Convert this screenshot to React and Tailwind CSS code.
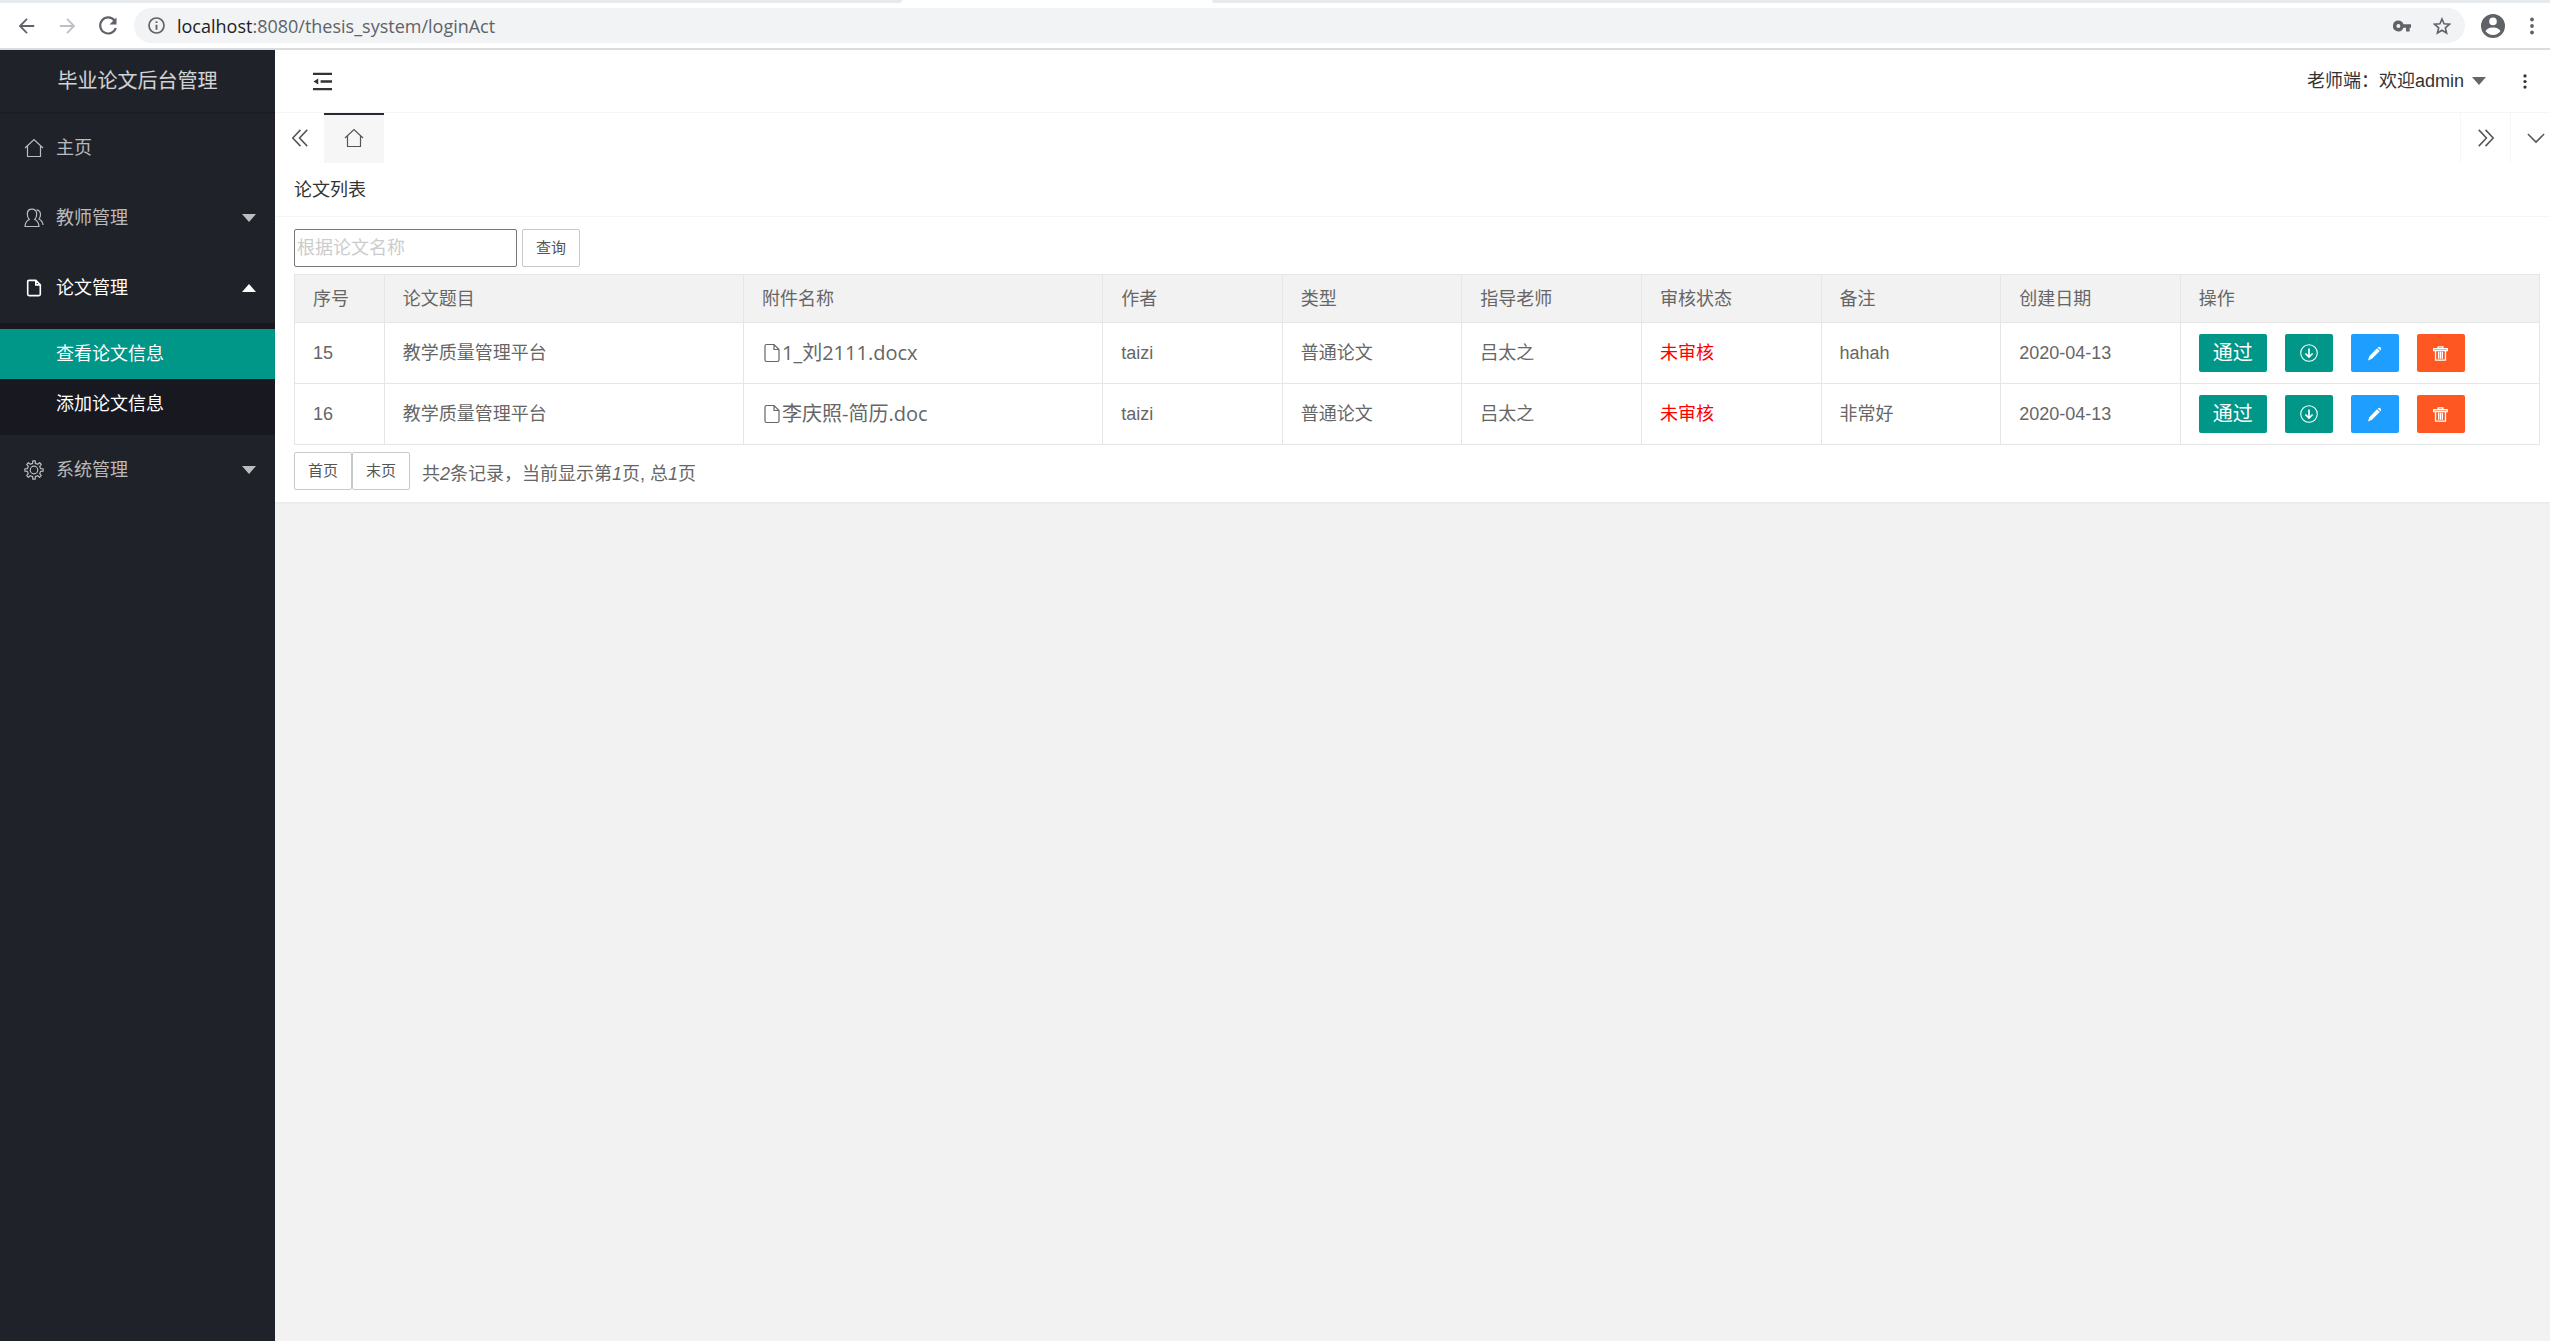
import React, { useState } from 'react';

const cjk = "font-['Liberation_Sans','Noto_Sans_CJK_SC',sans-serif]";
const ui = "font-['Open_Sans','Noto_Sans_CJK_SC',sans-serif]";

const papers = [
  { id: 15, title: '教学质量管理平台', file: '1_刘2111.docx', author: 'taizi', type: '普通论文', teacher: '吕太之', status: '未审核', remark: 'hahah', date: '2020-04-13' },
  { id: 16, title: '教学质量管理平台', file: '李庆照-简历.doc', author: 'taizi', type: '普通论文', teacher: '吕太之', status: '未审核', remark: '非常好', date: '2020-04-13' },
];

const columns = [
  { label: '序号', width: 'w-[4%]' },
  { label: '论文题目', width: 'w-[16%]' },
  { label: '附件名称', width: 'w-[16%]' },
  { label: '作者', width: 'w-[8%]' },
  { label: '类型', width: 'w-[8%]' },
  { label: '指导老师', width: 'w-[8%]' },
  { label: '审核状态', width: 'w-[8%]' },
  { label: '备注', width: 'w-[8%]' },
  { label: '创建日期', width: 'w-[8%]' },
  { label: '操作', width: 'w-[16%]' },
];

const Icon = ({ children, className = 'size-5' }) => (
  <svg viewBox="0 0 20 20" className={`${className} shrink-0`} fill="none" stroke="currentColor" strokeWidth="1.2" aria-hidden="true">
    {children}
  </svg>
);

const HomeIcon = ({ className }) => (
  <Icon className={className}>
    <path d="M1 10 10 1.500l9 8.500M3.500 8v10.500h13V8" />
  </Icon>
);

const UserIcon = () => (
  <Icon>
    <path d="M1 18.500c.2-3.500 1.400-5.600 4.200-7C3.700 10 3.300 8 3.300 6c0-3 1.800-4.800 4.700-4.800s4.700 1.800 4.700 4.800c0 2-.4 4-1.900 5.500 2.800 1.400 4 3.500 4.200 7z" />
    <path d="M12.500 1.800c2.700.4 4 2.200 4 4.700 0 1.600-.4 3-1.500 4.500 2.400 1.400 3.800 3.200 4 6" />
  </Icon>
);

const FileIcon = ({ className, strokeWidth = 1.2 }) => (
  <Icon className={className}>
    <path strokeWidth={strokeWidth} d="M12 1.500H4.500Q3 1.500 3 3v14q0 1.500 1.500 1.500h11q1.500 0 1.500-1.500V6.500zM12 1.500v5h5" />
  </Icon>
);

const GearIcon = () => (
  <Icon>
    <circle cx="10" cy="10" r="3.8" />
    <path strokeLinejoin="round" d="M8.6 3.400 8.800.9h2.400l.2 2.500 2.300.9 1.900-1.600 1.700 1.700-1.600 1.900.9 2.300 2.500.2v2.400l-2.500.2-.9 2.300 1.600 1.900-1.700 1.700-1.900-1.600-2.300.9-.2 2.500H8.800l-.2-2.500-2.300-.9-1.900 1.600-1.700-1.700 1.600-1.900-.9-2.300-2.500-.2V8.800l2.500-.2.9-2.300-1.600-1.900 1.700-1.700 1.900 1.600z" />
  </Icon>
);

const Caret = ({ up }) => (
  <svg viewBox="0 0 14 8" className="h-2 w-[14px] shrink-0" fill="currentColor" aria-hidden="true">
    <path d={up ? 'M0 8 7 0l7 8z' : 'M0 0h14L7 8z'} />
  </svg>
);

const DotsIcon = ({ className = 'h-5 w-1' }) => (
  <svg viewBox="0 0 4 20" className={className} fill="currentColor" aria-hidden="true">
    <circle cx="2" cy="3.5" r="1.9" />
    <circle cx="2" cy="10" r="1.9" />
    <circle cx="2" cy="16.5" r="1.9" />
  </svg>
);

const BrowserBar = () => (
  <header className="bg-white border-b-2 border-[#dadce0]">
    <div className="flex h-[3px]">
      <div className="w-[902px] rounded-br bg-[#e7eaed]" />
      <div className="w-[310px]" />
      <div className="flex-1 rounded-bl bg-[#e7eaed]" />
    </div>
    <div className="flex h-[45px] items-center pl-[18px] pr-4 text-[#5f6368]">
      <button aria-label="Back">
        <Icon className="size-[18px]"><path strokeWidth="2" d="M18 10H2.500M10 2.200 2.200 10l7.800 7.800" /></Icon>
      </button>
      <button aria-label="Forward" className="ml-[22px] text-[#bdc1c6]">
        <Icon className="size-[18px]"><path strokeWidth="2" d="M2 10h15.500M10 2.200l7.800 7.800-7.800 7.800" /></Icon>
      </button>
      <button aria-label="Reload" className="ml-[22px]">
        <Icon>
          <path strokeWidth="2.2" d="M16.500 4.500A8 8 0 1 0 17.800 12" />
          <path d="M18.500 1.500v7h-7z" fill="currentColor" stroke="none" />
        </Icon>
      </button>
      <div className="ml-4 flex h-[35px] flex-1 items-center rounded-full bg-[#f1f3f4] px-[14px]">
        <Icon className="size-[17px]">
          <circle cx="10" cy="10" r="8.8" strokeWidth="2" />
          <path strokeWidth="2.2" d="M10 9v6M10 5v2.200" />
        </Icon>
        <span className={`${ui} ml-3 text-lg leading-6`}>
          <span className="text-[#202124]">localhost</span>:8080/thesis_system/loginAct
        </span>
        <button aria-label="Passwords" className="ml-auto">
          <svg viewBox="0 0 20 12" className="h-3 w-[18px]" fill="currentColor">
            <path fillRule="evenodd" d="M6 0a6 6 0 0 1 5.600 4H20v4h-1.500v4h-4V8h-2.900A6 6 0 1 1 6 0zm0 3.800a2.200 2.200 0 1 0 0 4.400 2.200 2.200 0 0 0 0-4.400z" />
          </svg>
        </button>
        <button aria-label="Bookmark" className="ml-[22px]">
          <Icon className="size-[18px]">
            <path strokeWidth="1.8" d="m10 2.200 2.300 5.400 5.900.5-4.500 3.900 1.400 5.800L10 14.700l-5.100 3.100L6.300 12 1.800 8.100l5.900-.5z" />
          </Icon>
        </button>
      </div>
      <button aria-label="Profile" className="ml-4">
        <svg viewBox="0 0 24 24" className="size-6" fill="currentColor">
          <path fillRule="evenodd" d="M12 0a12 12 0 1 1 0 24 12 12 0 0 1 0-24zm0 3.600a3.800 3.800 0 1 0 0 7.600 3.800 3.800 0 0 0 0-7.600zm0 10c-3.400 0-6.600 1.600-7.400 3.600a9.200 9.200 0 0 0 14.800 0c-.8-2-4-3.600-7.400-3.600z" />
        </svg>
      </button>
      <button aria-label="Menu" className="ml-[25px]"><DotsIcon /></button>
    </div>
  </header>
);

const MenuItem = ({ icon, label, caret, active }) => (
  <a href="#" className={`flex h-[70px] items-center pl-6 pr-[19px] ${active ? 'text-white' : 'text-white/70'}`}>
    <span className="flex w-5 justify-center">{icon}</span>
    <span className="ml-3 flex-1">{label}</span>
    {caret && <Caret up={caret === 'up'} />}
  </a>
);

const Sidebar = () => (
  <aside className="w-[275px] shrink-0 bg-[#20222a] text-lg leading-6">
    <div className="flex h-[62px] items-center justify-center text-xl text-white/80 shadow-[0_1px_2px_0_rgba(0,0,0,0.3)]">毕业论文后台管理</div>
    <nav className="pt-px">
      <MenuItem icon={<HomeIcon />} label="主页" />
      <MenuItem icon={<UserIcon />} label="教师管理" caret="down" />
      <MenuItem icon={<FileIcon className="size-[18px]" strokeWidth={1.8} />} label="论文管理" caret="up" active />
      <div className="bg-[#181920] py-[6px] text-white">
        <a href="#" className="flex h-[50px] items-center bg-[#009688] pl-14">查看论文信息</a>
        <a href="#" className="flex h-[50px] items-center pl-14">添加论文信息</a>
      </div>
      <MenuItem icon={<GearIcon />} label="系统管理" caret="down" />
    </nav>
  </aside>
);

const actionBtn = 'flex h-[38px] items-center justify-center rounded-xs text-white';

const RowActions = () => (
  <div className="flex gap-[18px]">
    <button className={`${actionBtn} w-[68px] bg-[#009688] text-xl`}>通过</button>
    <button aria-label="下载" className={`${actionBtn} w-12 bg-[#009688]`}>
      <Icon className="size-[18px]">
        <circle cx="10" cy="10" r="9.2" />
        <path d="M10 5v9.500M6 10.500l4 4 4-4" strokeWidth="1.8" />
      </Icon>
    </button>
    <button aria-label="编辑" className={`${actionBtn} w-12 bg-[#1e9fff]`}>
      <svg viewBox="0 0 16 16" className="size-[15px]" fill="currentColor">
        <path d="M1 15.500 2.500 11l8.200-8.500 2.900 2.800L5.300 13.700zM11.600 1.600q1.500-1.400 2.900-.1 1.300 1.400 0 2.900l-.2.200-2.900-2.800z" />
      </svg>
    </button>
    <button aria-label="删除" className={`${actionBtn} w-12 bg-[#ff5722]`}>
      <svg viewBox="0 0 16 16" className="size-[15px]" fill="none" stroke="currentColor" strokeWidth="1.4">
        <path d="M.8 2.800h14.400v2H.8zM5.500 2.500V1h5v1.500M2.700 5v10h10.600V5M6 6v7.500M8 6v7.500M10 6v7.500" />
      </svg>
    </button>
  </div>
);

const PaperTable = () => (
  <table className="mt-[7px] w-full table-fixed border-collapse text-left text-[#666]">
    <thead>
      <tr className="h-12 bg-[#f2f2f2]">
        {columns.map((c) => (
          <th key={c.label} className={`${c.width} border border-[#e6e6e6] px-[18px] font-normal`}>{c.label}</th>
        ))}
      </tr>
    </thead>
    <tbody>
      {papers.map((p) => (
        <tr key={p.id} className="h-[61px] [&>td]:border [&>td]:border-[#e6e6e6] [&>td]:px-[18px]">
          <td>{p.id}</td>
          <td>{p.title}</td>
          <td>
            <a href="#" className={`${ui} flex items-center text-xl`}>
              <FileIcon />
              {p.file}
            </a>
          </td>
          <td>{p.author}</td>
          <td>{p.type}</td>
          <td>{p.teacher}</td>
          <td className="text-[#f00]">{p.status}</td>
          <td>{p.remark}</td>
          <td>{p.date}</td>
          <td><RowActions /></td>
        </tr>
      ))}
    </tbody>
  </table>
);

const smallBtn = 'h-[38px] rounded-xs border border-[#c9c9c9] bg-white px-[13px] text-[15px] text-[#555]';

const App = () => {
  const [keyword, setKeyword] = useState('');

  return (
    <div lang="zh-CN" className={`${cjk} flex min-h-screen flex-col bg-[#f2f2f2] text-lg leading-6`}>
      <BrowserBar />
      <div className="flex flex-1">
        <Sidebar />
        <main className="min-w-0 flex-1">
          {/* Top bar */}
          <div className="flex h-[63px] items-center border-b border-[#f6f6f6] bg-white pl-[38px] pr-[23px] text-[#333]">
            <button aria-label="侧边伸缩">
              <Icon className="size-[19px]">
                <path strokeWidth="2.4" d="M0 2h20M8 10h12M0 18h20" />
                <path d="M5.500 6.800v6.400L.5 10z" fill="currentColor" stroke="none" />
              </Icon>
            </button>
            <button className="ml-auto flex items-center gap-2">
              老师端：欢迎admin
              <span className="text-[#666]"><Caret /></span>
            </button>
            <button aria-label="更多" className="ml-[37px]"><DotsIcon className="h-[17px] w-1" /></button>
          </div>

          {/* Page tabs */}
          <div className="flex h-[50px] items-stretch bg-white text-[#555] shadow-[0_1px_2px_0_rgba(0,0,0,0.1)]">
            <button aria-label="向左" className="flex w-[49px] items-center justify-center">
              <Icon className="size-[18px]"><path d="M10.500 1 2 10l8.500 9M18 1l-8.500 9 8.500 9" strokeWidth="1.7" /></Icon>
            </button>
            <button aria-label="主页" className="flex w-[60px] items-center justify-center border-t-2 border-[#292b34] bg-[#f6f6f6] pb-[2px]">
              <HomeIcon />
            </button>
            <button aria-label="向右" className="ml-auto flex w-[50px] items-center justify-center border-l border-[#f6f6f6]">
              <Icon className="size-[18px]"><path d="m2 1 8.500 9L2 19M9.500 1l8.500 9-8.500 9" strokeWidth="1.7" /></Icon>
            </button>
            <button aria-label="展开" className="flex w-10 items-center justify-end border-l border-[#f6f6f6] pr-[5px]">
              <Icon className="size-[18px]"><path d="m1 5.500 9 9 9-9" strokeWidth="1.7" /></Icon>
            </button>
          </div>

          {/* Paper list */}
          <section className="bg-white shadow-[0_1px_2px_0_rgba(0,0,0,0.05)]">
            <h1 className="flex h-[54px] items-center border-b border-[#f6f6f6] px-[19px] text-[#333]">论文列表</h1>
            <div className="pt-3 pr-[10px] pb-3 pl-[19px]">
              <form className="flex items-center gap-[5px]" onSubmit={(e) => e.preventDefault()}>
                <input
                  type="text"
                  aria-label="根据论文名称"
                  placeholder="根据论文名称"
                  value={keyword}
                  onChange={(e) => setKeyword(e.target.value)}
                  className="h-[38px] w-[223px] rounded-xs border border-[#767676] px-[2px] placeholder:text-[#ccc]"
                />
                <button className={smallBtn}>查询</button>
              </form>
              <PaperTable />
              <div className="mt-[7px] flex items-center text-[#666]">
                <button className={smallBtn}>首页</button>
                <button className={smallBtn}>末页</button>
                <p className="ml-3 pt-[6px]">共<i>2</i>条记录，当前显示第<i>1</i>页, 总<i>1</i>页</p>
              </div>
            </div>
          </section>
        </main>
      </div>
    </div>
  );
};

export default App;
